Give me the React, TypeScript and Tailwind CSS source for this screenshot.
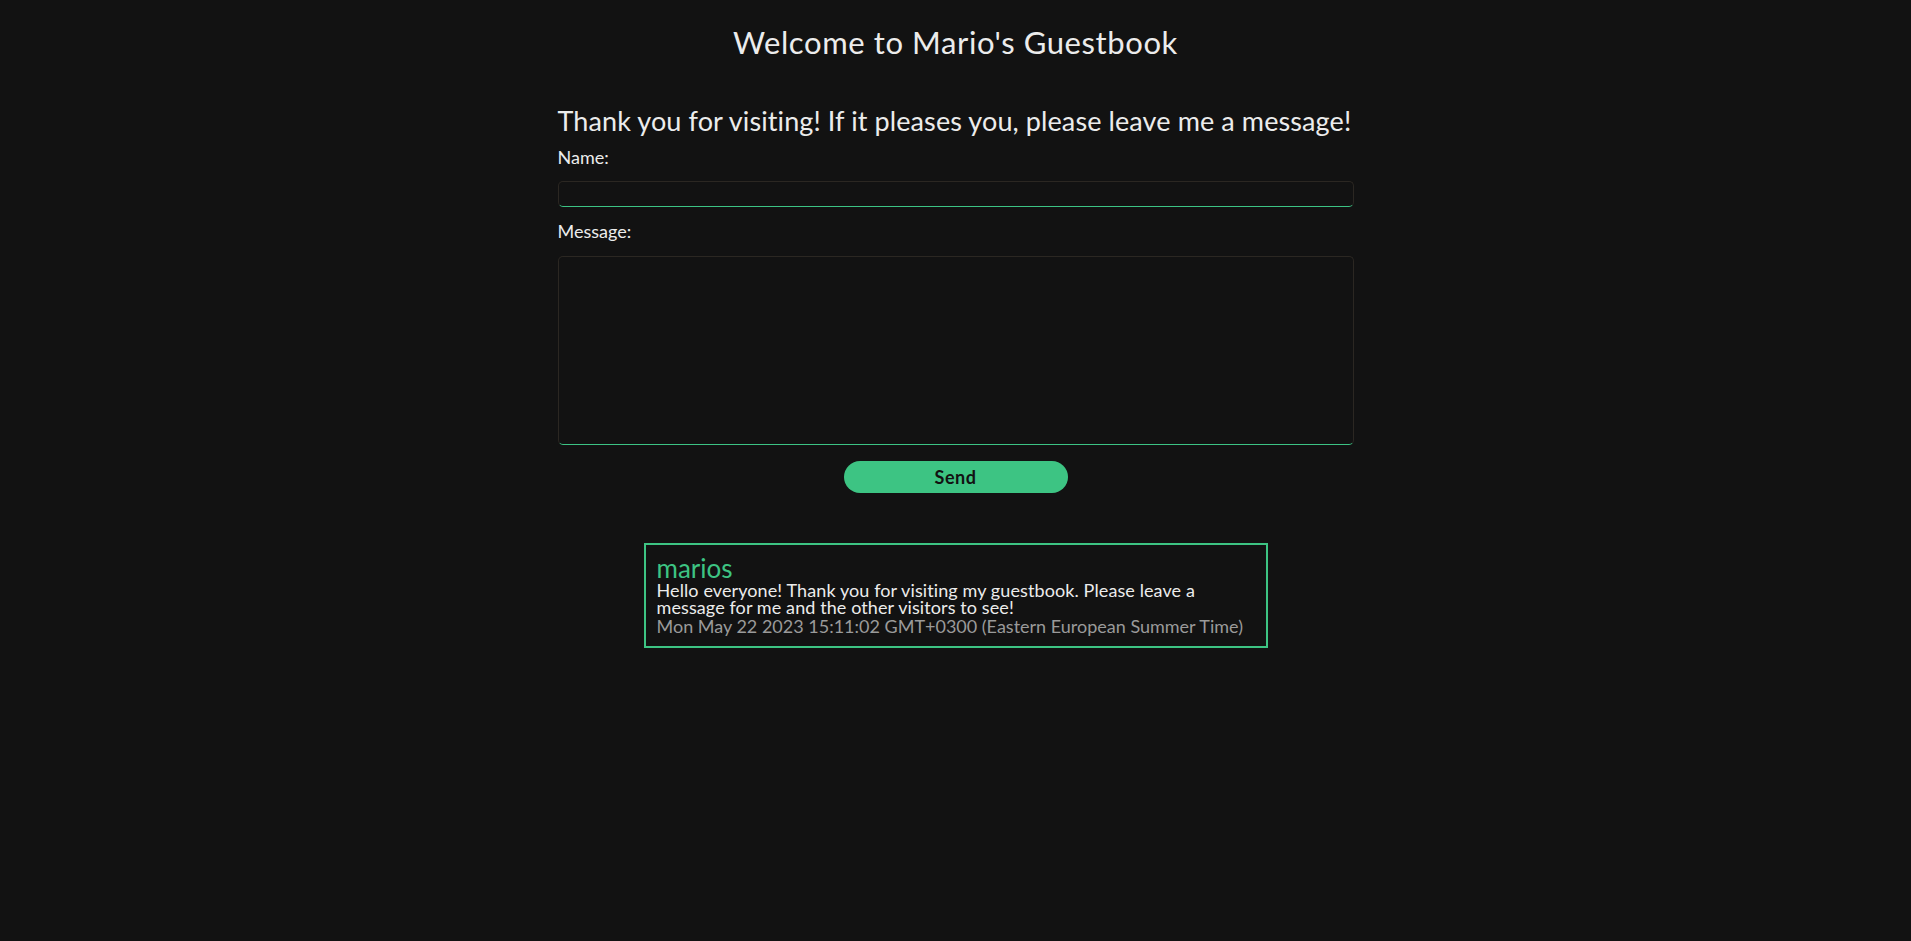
import React, { useState } from 'react'

const font = { fontFamily: 'Lato, "Liberation Sans", sans-serif' }

export default function App() {
  const [name, setName] = useState('')
  const [message, setMessage] = useState('')

  return (
    <div className="min-h-screen bg-[#121212] text-[#ececec] flex flex-col items-center" style={font}>
      <h1 className="mt-[22px] text-[31px] leading-[40px] tracking-[0.6px]">Welcome to Mario's Guestbook</h1>

      <form className="w-[796px] mt-[43px] flex flex-col" onSubmit={(e) => e.preventDefault()}>
        <h2 className="text-[27px] leading-[32px] tracking-[0.1px] whitespace-nowrap">Thank you for visiting! If it pleases you, please leave me a message!</h2>
        <label className="mt-[8px] text-[18px] leading-[24px]">Name:</label>
        <input
          className="mt-[12px] h-[26px] bg-[#121212] border border-[#2b2722] border-b-[#3cc384] rounded-[5px] outline-none px-2"
          value={name}
          onChange={(e) => setName(e.target.value)}
        />
        <label className="mt-[12px] text-[18px] leading-[24px]">Message:</label>
        <textarea
          className="mt-[13px] h-[189px] bg-[#121212] border border-[#2b2722] border-b-[#3cc384] rounded-[5px] outline-none resize-none p-2"
          value={message}
          onChange={(e) => setMessage(e.target.value)}
        />
        <button
          type="submit"
          className="self-center mt-[16px] w-[224px] h-[32px] rounded-full bg-[#3dc483] text-[#121212] font-bold text-[18px] tracking-[0.5px]"
        >
          Send
        </button>
      </form>

      <div className="mt-[50px] w-[624px] border-2 border-[#3dc483] px-[11px] pt-[9px] pb-[10px]">
        <div className="text-[#3dc483] text-[26px] leading-[28px]">marios</div>
        <div className="text-[18px] leading-[17px] tracking-[0.1px]">
          Hello everyone! Thank you for visiting my guestbook. Please leave a message for me and the other visitors to see!
        </div>
        <div className="text-[18px] leading-[20px] text-[#9a9a9a]">Mon May 22 2023 15:11:02 GMT+0300 (Eastern European Summer Time)</div>
      </div>
    </div>
  )
}
